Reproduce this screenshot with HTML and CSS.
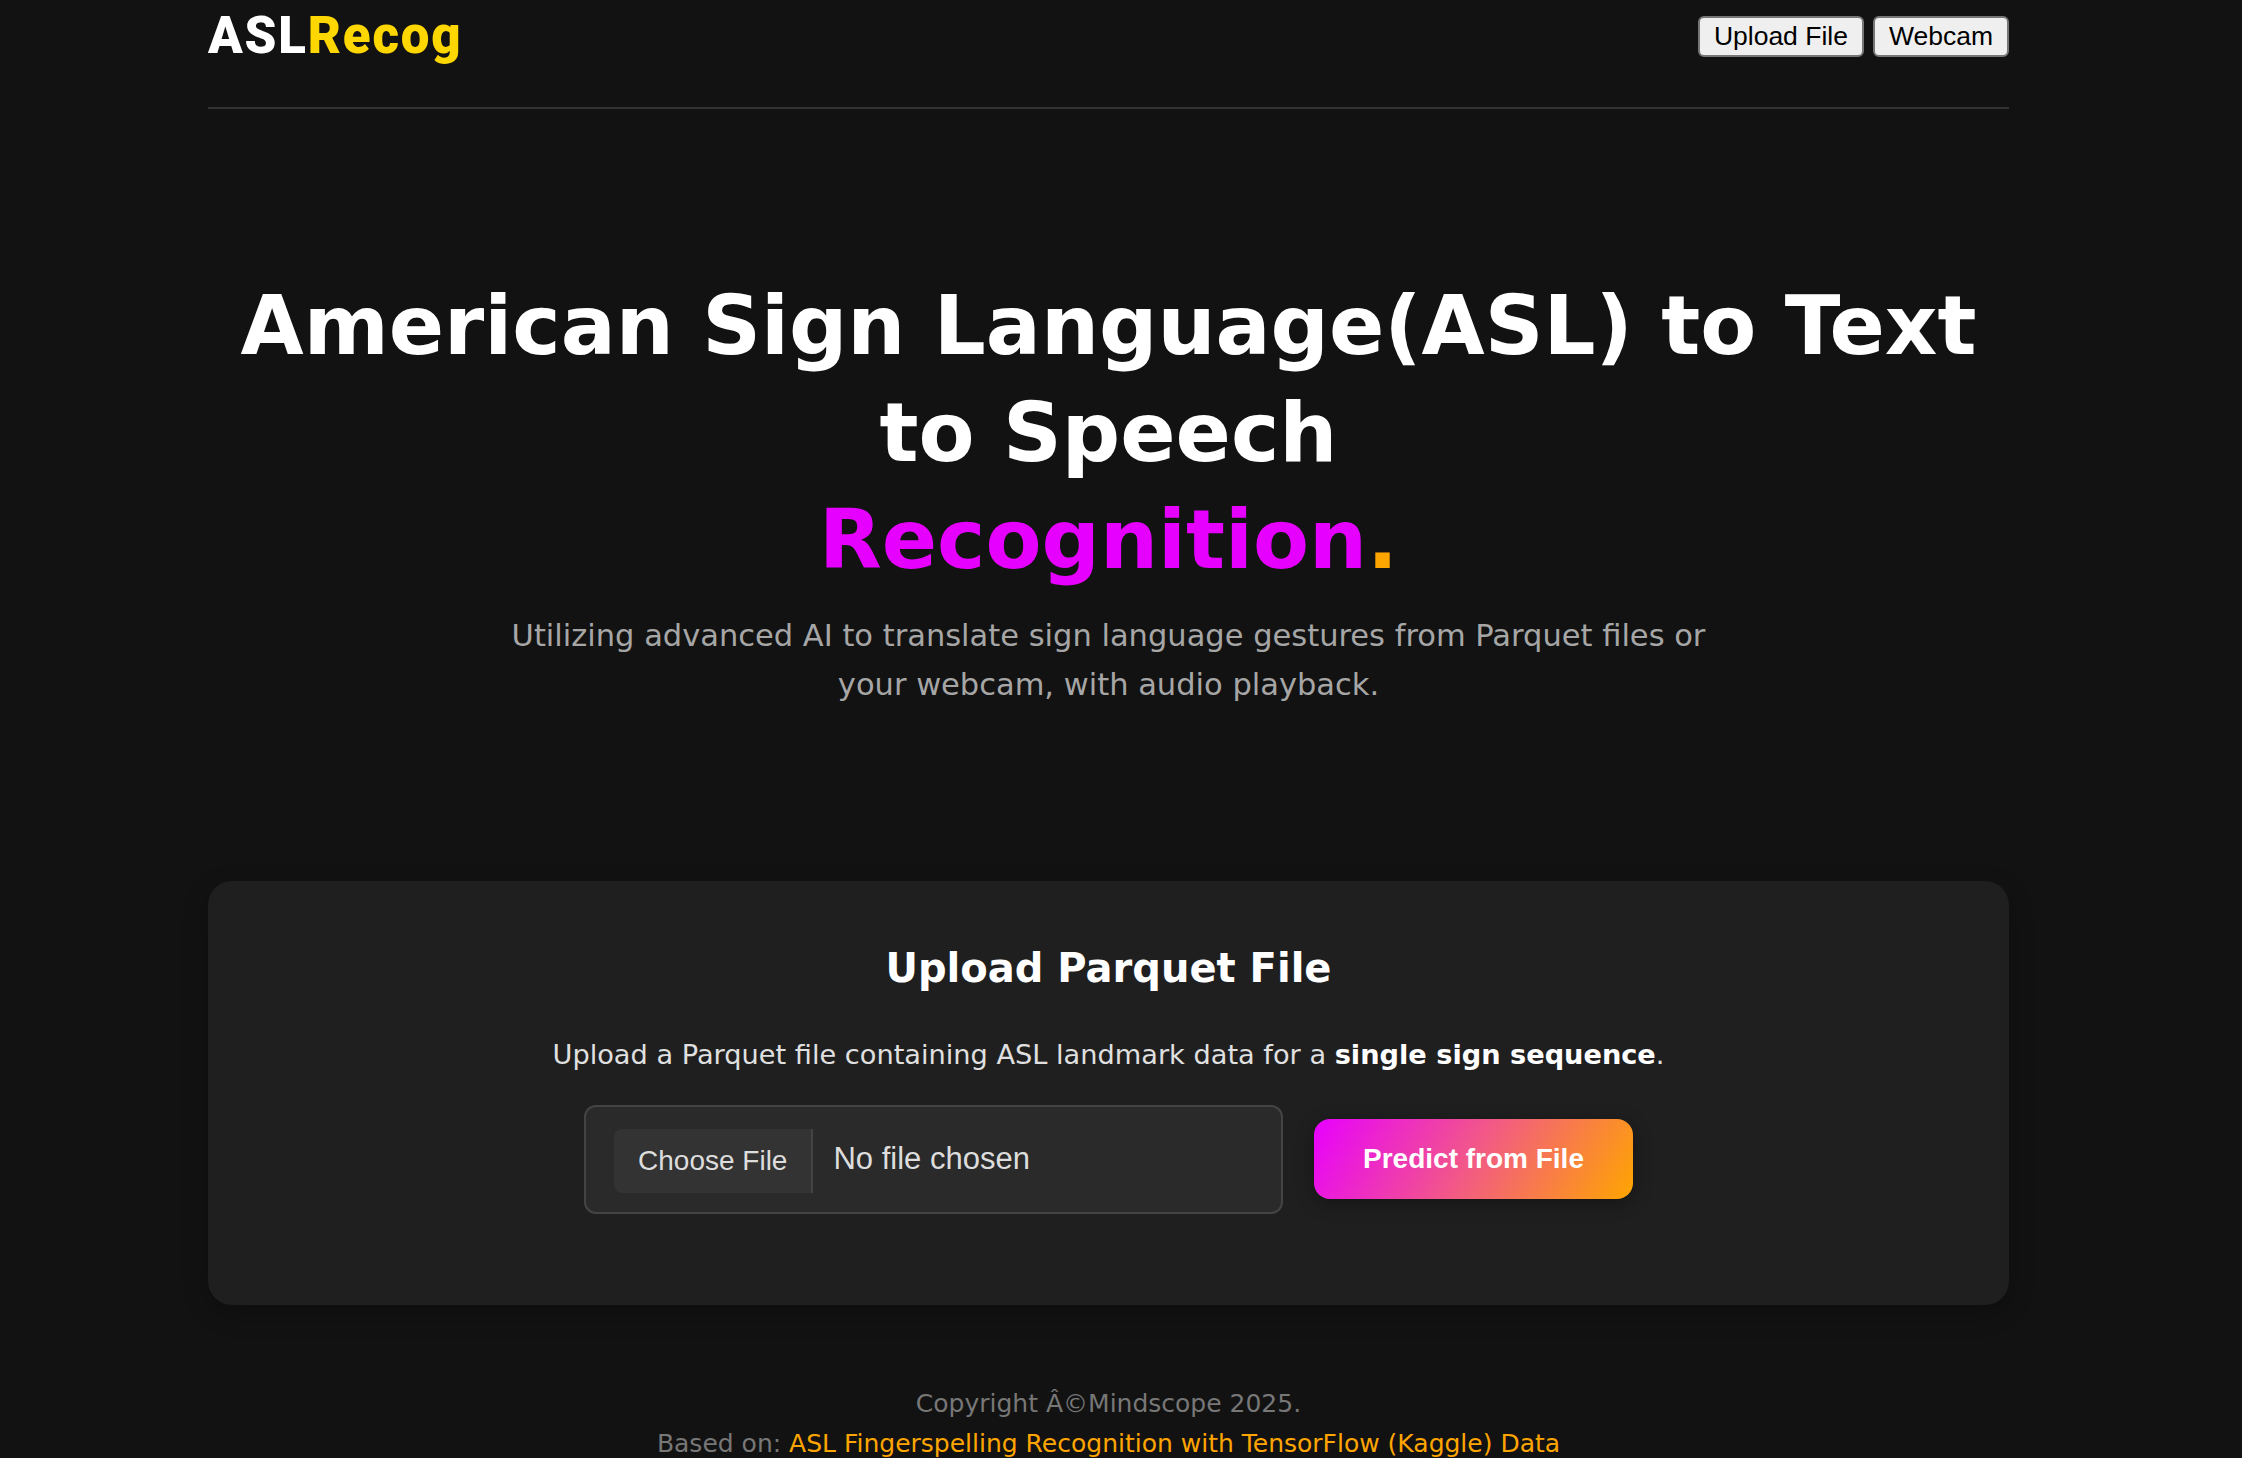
FILE: index.html
```html
<!DOCTYPE html>
<html lang="en">
<head>
<meta charset="utf-8">
<title>ASLRecog</title>
<link rel="stylesheet" href="styles.css">
</head>
<body>
<div class="page">
  <header class="site-header">
    <div class="logo"><span class="logo-white">ASL</span><span class="logo-gold">Recog</span></div>
    <nav class="nav">
      <button class="nav-btn" type="button">Upload File</button>
      <button class="nav-btn" type="button">Webcam</button>
    </nav>
  </header>

  <section class="hero">
    <h1 class="hero-title">American Sign Language(ASL) to Text<br>to Speech<br><span class="accent">Recognition</span><span class="dot">.</span></h1>
    <p class="hero-sub">Utilizing advanced AI to translate sign language gestures from Parquet files or<br>your webcam, with audio playback.</p>
  </section>

  <section class="card">
    <h2 class="card-title">Upload Parquet File</h2>
    <p class="card-text">Upload a Parquet file containing ASL landmark data for a <strong>single sign sequence</strong>.</p>
    <div class="upload-row">
      <input class="file-input" type="file" accept=".parquet">
      <button class="predict-btn" type="button">Predict from File</button>
    </div>
  </section>

  <footer class="site-footer">
    <p class="footer-line">Copyright Â©Mindscope 2025.</p>
    <p class="footer-line">Based on: <a class="footer-link" href="#">ASL Fingerspelling Recognition with TensorFlow (Kaggle) Data</a></p>
  </footer>
</div>
</body>
</html>
```
FILE: styles.css
```css
* {
  box-sizing: border-box;
}

html, body {
  margin: 0;
  padding: 0;
  background: #121212;
}

body {
  font-family: "DejaVu Sans", "Noto Sans", sans-serif;
  color: #ffffff;
  overflow: hidden;
}

.page {
  width: 1801px;
  margin-left: 208px;
}

/* Header */
.site-header {
  box-sizing: content-box;
  height: 72px;
  padding-bottom: 35px;
  border-bottom: 2px solid #333333;
  display: flex;
  align-items: center;
  justify-content: space-between;
}

.logo {
  font-family: Roboto, "Liberation Sans", sans-serif;
  font-weight: 900;
  font-size: 51px;
  line-height: 50px;
  letter-spacing: 1.8px;
}

.logo-white { color: #ffffff; }
.logo-gold { color: #ffd700; }

.nav {
  display: flex;
  gap: 9px;
}

.nav-btn {
  font-family: "Liberation Sans", Arial, sans-serif;
  font-size: 26.5px;
  line-height: normal;
  color: #000000;
  background: #efefef;
  border: 2px solid #767676;
  border-radius: 6px;
  padding: 3px 14px;
  height: 41px;
}

/* Hero */
.hero {
  text-align: center;
  padding-top: 163px;
}

.hero-title {
  margin: 0;
  font-family: "DejaVu Sans", sans-serif;
  font-weight: 700;
  font-size: 81.6px;
  line-height: 107px;
  color: #ffffff;
}

.accent { color: #e600ff; }
.dot { color: #ffa500; }

.hero-sub {
  margin: 18px 0 0;
  font-size: 30.5px;
  line-height: 49px;
  color: #a6a6a6;
}

/* Card */
.card {
  margin-top: 172px;
  background: #1f1f1f;
  border-radius: 24px;
  padding: 62px 40px 91px;
  text-align: center;
  box-shadow: 0 8px 24px rgba(0, 0, 0, 0.25);
}

.card-title {
  margin: 0;
  font-family: "DejaVu Sans", sans-serif;
  font-weight: 700;
  font-size: 40px;
  line-height: 50px;
  color: #ffffff;
}

.card-text {
  margin: 42px 0 0;
  font-size: 27.2px;
  line-height: 40px;
  color: #e0e0e0;
}

.card-text strong {
  color: #ffffff;
  font-weight: 700;
}

.upload-row {
  margin-top: 30px;
  display: flex;
  justify-content: center;
  align-items: center;
  gap: 31px;
}

.file-input {
  width: 699px;
  padding: 20px 28px 19px;
  background: #2a2a2a;
  border: 2px solid #444444;
  border-radius: 12px;
  color: #dddddd;
  font-family: "Liberation Sans", Arial, sans-serif;
  font-size: 31px;
  line-height: 64px;
}

.file-input::file-selector-button {
  font-family: "Liberation Sans", Arial, sans-serif;
  font-size: 28px;
  color: #dddddd;
  background: #333333;
  border: none;
  border-right: 2px solid #444444;
  border-radius: 8px 0 0 8px;
  height: 64px;
  padding: 0 24px;
  margin-right: 20px;
  vertical-align: middle;
}

.predict-btn {
  font-family: "Liberation Sans", Arial, sans-serif;
  font-weight: 700;
  font-size: 28px;
  line-height: 32px;
  color: #ffffff;
  background: linear-gradient(120deg, #e800ff 0%, #f25a85 50%, #ffa500 100%);
  border: none;
  border-radius: 16px;
  padding: 24px 49px;
  box-shadow: 0 4px 18px rgba(0, 0, 0, 0.35);
}

/* Footer */
.site-footer {
  margin-top: 79px;
  text-align: center;
}

.footer-line {
  margin: 0;
  font-size: 25px;
  line-height: 40px;
  color: #777777;
}

.footer-link {
  color: #ffa500;
  text-decoration: none;
}
```
